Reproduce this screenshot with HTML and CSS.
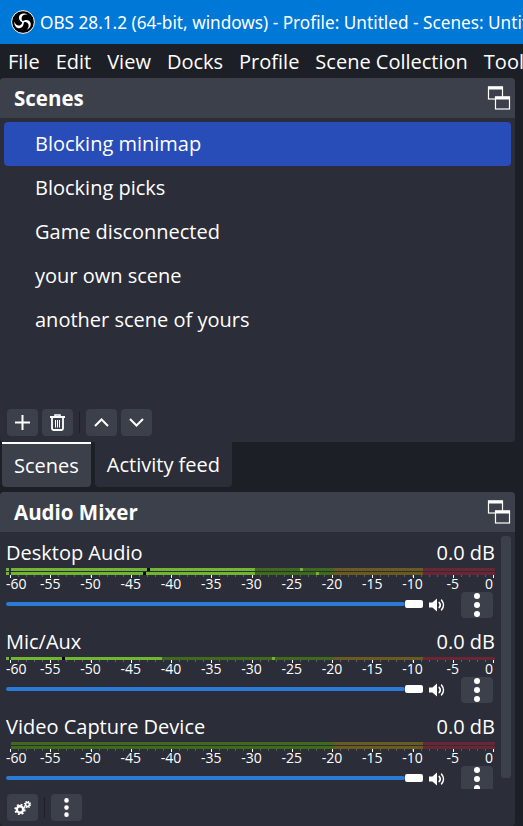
FILE: index.html
```html
<!DOCTYPE html>
<html lang="en">
<head>
<meta charset="utf-8">
<title>OBS 28.1.2</title>
<link rel="stylesheet" href="styles.css">
</head>
<body>
<svg class="defs" width="0" height="0" aria-hidden="true">
  <symbol id="float" viewBox="0 0 24 24">
    <g fill="none" stroke="#fff" stroke-width="1.2">
      <rect x="1.5" y="1" width="14" height="12"/>
      <rect x="8.5" y="11" width="14" height="12" fill="#3c404b"/>
    </g>
    <rect x="1" y="0.5" width="15" height="3" fill="#fff"/>
    <rect x="8" y="10.5" width="15" height="3" fill="#fff"/>
  </symbol>
  <symbol id="speaker" viewBox="0 0 16 14">
    <path d="M0 4.6h3.4L8 .6v12.8L3.4 9.4H0z" fill="#fff"/>
    <path d="M10.2 4.4c1.3 1.5 1.3 3.7 0 5.2M12.6 2.2c2.4 2.8 2.4 6.8 0 9.6" fill="none" stroke="#fff" stroke-width="1.6" stroke-linecap="round"/>
  </symbol>
  <symbol id="dots" viewBox="0 0 6 24">
    <circle cx="3" cy="3" r="3" fill="#fff"/><circle cx="3" cy="12" r="3" fill="#fff"/><circle cx="3" cy="21" r="3" fill="#fff"/>
  </symbol>
</svg>

<header class="titlebar">
  <svg class="logo" viewBox="0 0 24 24" width="24" height="24" aria-hidden="true">
    <circle cx="12" cy="12" r="11.4" fill="#000" stroke="#fff" stroke-width="1"/>
    <g fill="#fff">
      <path id="blade" d="M12 12.800C8.200 11.300 6.500 7.200 9.400 4.600 11.200 3 14.300 2.900 16.800 4.900 13.800 4.100 11.300 5 10.700 7.500 10.200 9.500 11.200 11 13.200 12z"/>
      <use href="#blade" transform="rotate(120 12 12)"/>
      <use href="#blade" transform="rotate(240 12 12)"/>
    </g>
  </svg>
  <span class="title">OBS 28.1.2 (64-bit, windows) - Profile: Untitled - Scenes: Untitled</span>
</header>

<nav class="menubar">
  <span>File</span><span>Edit</span><span>View</span><span>Docks</span><span>Profile</span><span>Scene Collection</span><span>Tools</span>
</nav>

<section class="dock scenes">
  <div class="dock-head"><h2>Scenes</h2><svg class="float" width="24" height="24"><use href="#float"/></svg></div>
  <ul class="scene-list">
    <li class="selected">Blocking minimap</li>
    <li>Blocking picks</li>
    <li>Game disconnected</li>
    <li>your own scene</li>
    <li>another scene of yours</li>
  </ul>
  <div class="toolbar">
    <button class="tool"><svg width="15" height="15" viewBox="0 0 15 15"><path d="M7.500 0v15M0 7.500h15" stroke="#fff" stroke-width="2"/></svg></button>
    <button class="tool"><svg width="15" height="17" viewBox="0 0 15 17" fill="none" stroke="#fff"><path d="M0 3h15" stroke-width="2"/><path d="M5 2.500V1h5v1.500" stroke-width="1.500"/><path d="M2 4v10.500A1.500 1.500 0 0 0 3.500 16h8a1.500 1.500 0 0 0 1.500-1.500V4" stroke-width="1.800"/><path d="M5.500 6v7.500M7.500 6v7.500M9.500 6v7.500" stroke-width="1"/></svg></button>
    <span class="sep"></span>
    <button class="tool"><svg width="15" height="9" viewBox="0 0 15 9"><path d="M1 8l6.500-6.500L14 8" fill="none" stroke="#fff" stroke-width="2"/></svg></button>
    <button class="tool"><svg width="15" height="9" viewBox="0 0 15 9"><path d="M1 1l6.500 6.500L14 1" fill="none" stroke="#fff" stroke-width="2"/></svg></button>
  </div>
</section>

<div class="tabs">
  <span class="tab active">Scenes</span>
  <span class="tab">Activity feed</span>
</div>

<section class="dock mixer">
  <div class="dock-head"><h2>Audio Mixer</h2><svg class="float" width="24" height="24"><use href="#float"/></svg></div>
  <div class="mixer-body">
    <div class="strips">
      <div class="strip">
        <div class="strip-head"><span>Desktop Audio</span><span>0.0 dB</span></div>
        <div class="meter">
          <div class="channel"><i class="lead"></i><i class="fill" style="width:244px"></i><b class="peak" style="left:141px"></b><b class="hit" style="left:294px"></b></div>
          <div class="channel"><i class="lead"></i><i class="fill" style="width:244px"></i><b class="peak" style="left:137px"></b><b class="hit" style="left:310px"></b></div>
        </div>
        <div class="scale"><span>-60</span><span>-55</span><span>-50</span><span>-45</span><span>-40</span><span>-35</span><span>-30</span><span>-25</span><span>-20</span><span>-15</span><span>-10</span><span>-5</span><span>0</span></div>
        <div class="controls">
          <div class="slider"><span class="track"></span><span class="handle"></span></div>
          <svg class="speaker" width="16" height="14"><use href="#speaker"/></svg>
          <button class="more"><svg width="6" height="24"><use href="#dots"/></svg></button>
        </div>
      </div>
      <div class="strip">
        <div class="strip-head"><span>Mic/Aux</span><span>0.0 dB</span></div>
        <div class="meter">
          <div class="channel"><i class="lead"></i><i class="fill" style="width:151px"></i><b class="peak" style="left:56px"></b><b class="hit" style="left:266px"></b></div>
        </div>
        <div class="scale"><span>-60</span><span>-55</span><span>-50</span><span>-45</span><span>-40</span><span>-35</span><span>-30</span><span>-25</span><span>-20</span><span>-15</span><span>-10</span><span>-5</span><span>0</span></div>
        <div class="controls">
          <div class="slider"><span class="track"></span><span class="handle"></span></div>
          <svg class="speaker" width="16" height="14"><use href="#speaker"/></svg>
          <button class="more"><svg width="6" height="24"><use href="#dots"/></svg></button>
        </div>
      </div>
      <div class="strip">
        <div class="strip-head"><span>Video Capture Device</span><span>0.0 dB</span></div>
        <div class="meter">
          <div class="channel"></div>
          <div class="channel"></div>
        </div>
        <div class="scale"><span>-60</span><span>-55</span><span>-50</span><span>-45</span><span>-40</span><span>-35</span><span>-30</span><span>-25</span><span>-20</span><span>-15</span><span>-10</span><span>-5</span><span>0</span></div>
        <div class="controls">
          <div class="slider"><span class="track"></span><span class="handle"></span></div>
          <svg class="speaker" width="16" height="14"><use href="#speaker"/></svg>
          <button class="more"><svg width="6" height="24"><use href="#dots"/></svg></button>
        </div>
      </div>
    </div>
    <div class="scrollbar"></div>
  </div>
  <div class="toolbar mixer-tools">
    <button class="tool"><svg width="18" height="14" viewBox="0 0 18 14" fill="none" stroke="#fff"><circle cx="6" cy="8.500" r="3.200" stroke-width="2.400"/><circle cx="6" cy="8.500" r="4.800" stroke-width="1.800" stroke-dasharray="1.900 1.870"/><circle cx="13.500" cy="3.500" r="1.900" stroke-width="1.500"/><circle cx="13.500" cy="3.500" r="3" stroke-width="1.300" stroke-dasharray="1.300 1.050"/></svg></button>
    <span class="sep"></span>
    <button class="tool"><svg width="5" height="19" viewBox="0 0 6 24"><use href="#dots"/></svg></button>
  </div>
</section>
</body>
</html>
```

FILE: styles.css
```css
* { box-sizing: border-box; }
html, body { margin: 0; height: 826px; overflow: hidden; }
body {
  background: #1d1f26;
  color: #fff;
  font-family: "Open Sans", "Noto Sans", sans-serif;
  display: flex;
  flex-direction: column;
  width: 523px;
}
.defs { position: absolute; }

.titlebar {
  height: 44px;
  flex: none;
  background: #0078d7;
  display: flex;
  align-items: center;
  padding-left: 11px;
  white-space: nowrap;
  overflow: hidden;
}
.logo { flex: none; margin-right: 5px; }
.title { font-size: 17.2px; font-family: "Noto Sans", "Open Sans", sans-serif; }

.menubar {
  height: 34px;
  flex: none;
  display: flex;
  align-items: center;
  gap: 16px;
  padding-left: 8px;
  font-size: 20px;
  white-space: nowrap;
  overflow: hidden;
}

.dock {
  width: 515px;
  background: #2b2d38;
  border-radius: 4px;
  display: flex;
  flex-direction: column;
  flex: none;
}
.scenes { height: 364px; }
.mixer { height: 334px; }
.dock-head {
  height: 40px;
  flex: none;
  background: #3c404b;
  border-radius: 4px 4px 0 0;
  display: flex;
  align-items: center;
  justify-content: space-between;
  padding: 0 4px 0 14px;
}
.dock-head h2 { margin: 0; font-size: 20.5px; font-weight: 700; }
.float { flex: none; }

.scene-list {
  list-style: none;
  margin: 0;
  padding: 4px 4px 0;
  flex: 1;
  font-size: 20px;
}
.scene-list li {
  height: 44px;
  line-height: 44px;
  padding-left: 31px;
  border-radius: 4px;
}
.scene-list .selected { background: #284cb8; }

.toolbar {
  flex: none;
  display: flex;
  align-items: center;
  gap: 4px;
  padding: 0 0 6px 7px;
}
.tool {
  width: 31px;
  height: 27px;
  padding: 0;
  border: 0;
  border-radius: 4px;
  background: #3c404b;
  display: flex;
  align-items: center;
  justify-content: center;
}
.sep { width: 1px; height: 21px; background: #1d1f26; margin: 0 2px; }

.tabs {
  height: 50px;
  flex: none;
  display: flex;
  gap: 4px;
  padding: 0 0 5px 2px;
  font-size: 20px;
}
.tab {
  padding: 0 12px;
  background: #2b2d38;
  border-radius: 0 0 4px 4px;
  display: flex;
  align-items: center;
}
.tab.active { background: #3c404b; border-top: 2px solid #fff; }

.mixer-body {
  flex: 1;
  display: flex;
  min-height: 0;
  padding-top: 4px;
}
.strips {
  width: 495px;
  height: 253px;
  overflow: hidden;
  padding: 4px 0 0 6px;
  margin-right: 6px;
  flex: none;
}
.scrollbar {
  width: 10px;
  height: 242px;
  background: #3c404b;
  border-radius: 3px;
}
.strip { width: 489px; margin-bottom: 11px; }
.strip-head {
  height: 28px;
  display: flex;
  justify-content: space-between;
  align-items: center;
  font-size: 20px;
  padding-bottom: 4px;
}
.meter { display: flex; flex-direction: column; gap: 1px; }
.channel {
  height: 3px;
  position: relative;
  background: linear-gradient(90deg,
    transparent 5px,
    #3f6a1b 5px, #3f6a1b 328px,
    #6b5a1f 328px, #6b5a1f 417px,
    #6b2535 417px);
}
.lead { position: absolute; left: 0; top: 0; width: 3px; height: 3px; background: #72b533; }
.fill { position: absolute; left: 5px; top: 0; height: 3px; background: #72b533; }
.peak, .hit { position: absolute; top: 0; width: 3px; height: 3px; }
.peak { background: #000; }
.hit { background: #72b533; }

.scale {
  height: 17px;
  display: flex;
  font-size: 14px;
  line-height: 14px;
  padding-top: 2px;
  background-image:
    repeating-linear-gradient(90deg, #fff 0, #fff 1px, transparent 1px, transparent 40.270px),
    repeating-linear-gradient(90deg, #5b5e66 0, #5b5e66 1px, transparent 1px, transparent 8.050px);
  background-repeat: no-repeat, no-repeat;
  background-size: 100% 3px, 100% 2px;
  background-position: 4px 0, 4px 0;
}
.scale span { width: 40.270px; text-align: center; flex: none; }
.scale span:first-child { width: 24px; text-align: left; }
.scale span:last-child { width: 20px; text-align: right; }

.controls {
  height: 26px;
  display: flex;
  align-items: center;
}
.slider {
  width: 417px;
  height: 9px;
  display: flex;
  align-items: center;
  margin-top: -2px;
}
.track { width: 399px; height: 4px; background: #2a7ad6; border-radius: 2px; }
.handle { width: 18px; height: 8px; background: #fff; border-radius: 2px; }
.speaker { margin: 0 16px 0 6px; flex: none; }
.more {
  width: 32px;
  height: 26px;
  padding: 0;
  border: 0;
  border-radius: 4px;
  background: #3c404b;
  display: flex;
  align-items: center;
  justify-content: center;
}
.mixer-tools { padding-bottom: 5px; margin-top: 5px; }
```
